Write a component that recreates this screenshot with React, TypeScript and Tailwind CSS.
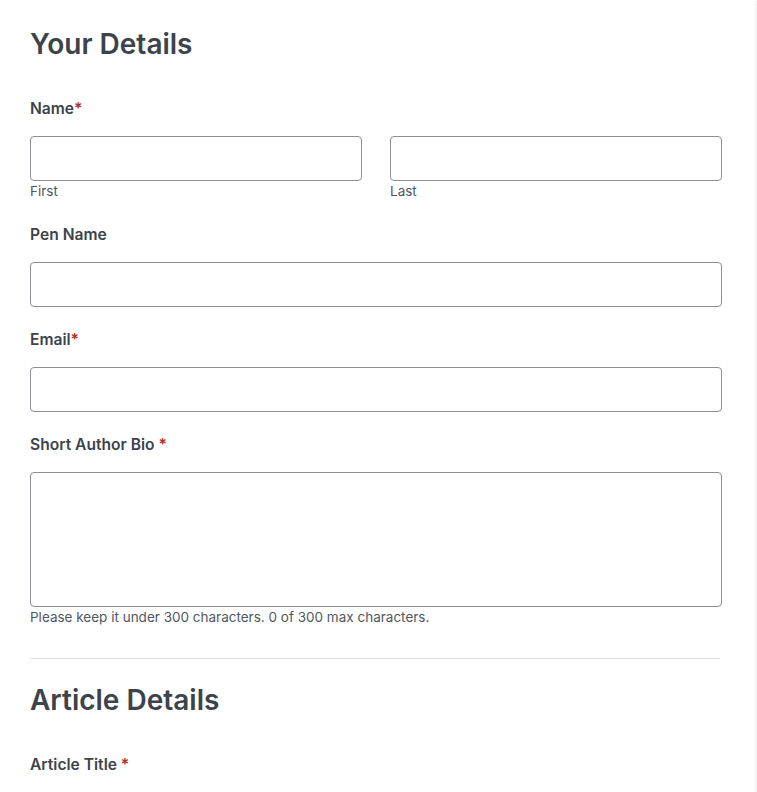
import React from "react";

const font = { fontFamily: "Inter, 'Noto Sans', sans-serif" };

function Label({ text, spaced }: { text: string; spaced?: boolean }) {
  return (
    <div className="pt-px text-[15.6px] leading-[22px] font-semibold text-[#3c434a] mb-[16px]">
      {text}
      <span className="text-[#b32d2e]">{spaced ? " *" : "*"}</span>
    </div>
  );
}

function Plain({ text }: { text: string }) {
  return (
    <div className="pt-px text-[15.6px] leading-[22px] font-semibold text-[#3c434a] mb-[16px]">{text}</div>
  );
}

const inputCls =
  "block w-full h-[45px] rounded-[4px] border border-[#8c8f94] bg-white";

export default function App() {
  return (
    <div className="min-h-screen bg-[#f3f3f3]" style={font}>
      <div className="bg-white mt-px mr-[2px] pl-[30px] pr-[33px] pt-[25px] pb-10 min-h-[791px]">
        <h2 className="text-[28px] leading-[36px] font-semibold text-[#3c434a] mb-[35px]">
          Your Details
        </h2>

        <Label text="Name" />
        <div className="grid grid-cols-2 gap-[28px]">
          <div>
            <div className={inputCls} />
            <div className="mt-px text-[13.5px] leading-[18px] text-[#50575e]">First</div>
          </div>
          <div>
            <div className={inputCls} />
            <div className="mt-px text-[13.5px] leading-[18px] text-[#50575e]">Last</div>
          </div>
        </div>

        <div className="mt-[23px]">
          <Plain text="Pen Name" />
          <div className={inputCls} />
        </div>

        <div className="mt-[21px]">
          <Label text="Email" />
          <div className={inputCls} />
        </div>

        <div className="mt-[21px]">
          <Label text="Short Author Bio" spaced />
          <div className="block w-full h-[135px] rounded-[4px] border border-[#8c8f94] bg-white" />
          <div className="mt-px text-[13.5px] leading-[18px] text-[#50575e]">
            Please keep it under 300 characters. 0 of 300 max characters.
          </div>
        </div>

        <div className="mt-[32px] mr-[2px] h-px bg-[#dcdcde]" />

        <h2 className="mt-[23px] text-[28px] leading-[36px] font-semibold text-[#3c434a] mb-[35px]">
          Article Details
        </h2>

        <Label text="Article Title" spaced />
        <div className={inputCls} />
      </div>
    </div>
  );
}
